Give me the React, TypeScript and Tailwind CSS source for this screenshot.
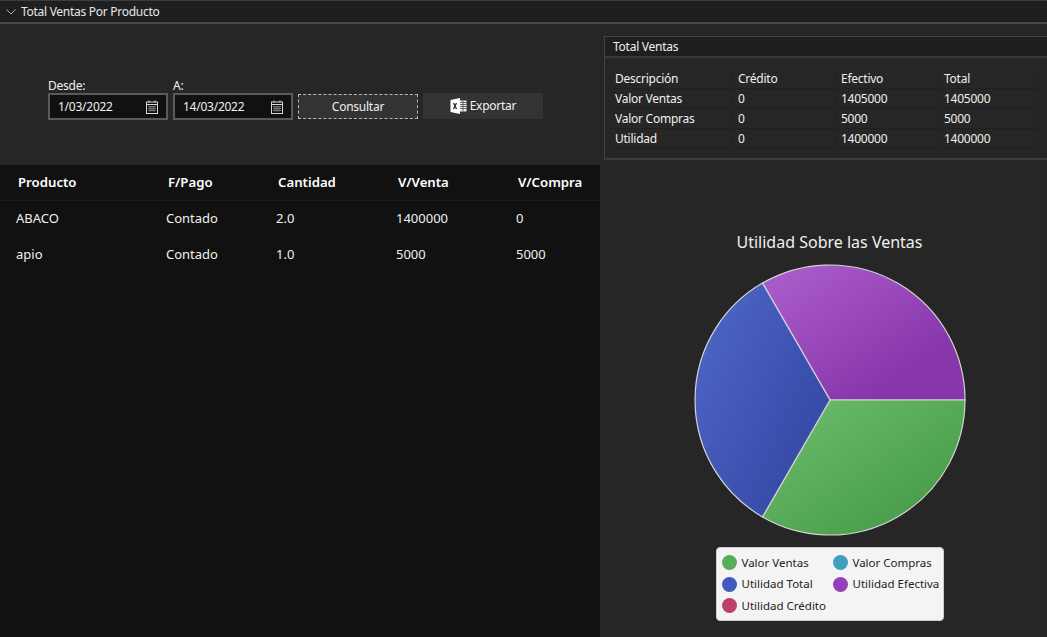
const columns = ["Producto", "F/Pago", "Cantidad", "V/Venta", "V/Compra"];
const widths = ["w-[150px]", "w-[110px]", "w-[120px]", "w-[120px]", "w-[82px]"];

const products = [
  ["ABACO", "Contado", "2.0", "1400000", "0"],
  ["apio", "Contado", "1.0", "5000", "5000"],
];

const totals = [
  ["Descripción", "Crédito", "Efectivo", "Total"],
  ["Valor Ventas", "0", "1405000", "1405000"],
  ["Valor Compras", "0", "5000", "5000"],
  ["Utilidad", "0", "1400000", "1400000"],
];
const totalWidths = ["w-[123px]", "w-[103px]", "w-[103px]", "w-[100px]"];

const legend = [
  { label: "Valor Ventas", color: "bg-[#58ad58]" },
  { label: "Valor Compras", color: "bg-[#409fbd]" },
  { label: "Utilidad Total", color: "bg-[#4259bd]" },
  { label: "Utilidad Efectiva", color: "bg-[#9440bd]" },
  { label: "Utilidad Crédito", color: "bg-[#bd4068]" },
];

function CalendarIcon() {
  return (
    <svg width="12" height="14" viewBox="0 0 12 14" fill="none" className="shrink-0">
      <rect x="0.5" y="2" width="11" height="11.5" stroke="#d8d8d8" />
      <path d="M0.5 4.5h11" stroke="#d8d8d8" />
      <path d="M3 0.5v2M9 0.5v2" stroke="#d8d8d8" />
      <path d="M2 6.5h8M2 8.5h8M2 10.5h8M4 6v5.5M6 6v5.5M8 6v5.5" stroke="#777" />
    </svg>
  );
}

function ExcelIcon() {
  return (
    <svg width="17" height="16" viewBox="0 0 17 16" fill="none">
      <path d="M0.5 2 L10 0 V16 L0.5 14 Z" fill="#fff" />
      <path d="M3.5 5 L6.5 11 M6.5 5 L3.5 11" stroke="#222" strokeWidth="1.2" />
      <rect x="10" y="2.5" width="6.5" height="11" fill="#eee" />
      <path d="M10 4.5h6.5M10 6.5h6.5M10 8.5h6.5M10 10.5h6.5M13 2.5v11" stroke="#333" strokeWidth="0.7" />
    </svg>
  );
}

function DateField({ label, value }: { label: string; value: string }) {
  return (
    <div className="flex w-[120px] flex-col">
      <label className="h-[15px] text-xs leading-[15px] tracking-[-0.25px] text-[#f0f0f0]">{label}</label>
      <div className="flex h-[27px] items-center justify-between border-2 border-[#5a5a5a] bg-[#111] pl-2 pr-[8px] text-xs tracking-[-0.25px] text-[#f0f0f0]">
        <span>{value}</span>
        <CalendarIcon />
      </div>
    </div>
  );
}

function PieChart() {
  return (
    <svg width="272" height="272" viewBox="-136 -136 272 272">
      <defs>
        <linearGradient id="purpleSlice" x1="0" y1="0" x2="1" y2="1">
          <stop offset="0.1" stopColor="#a95ac9" />
          <stop offset="0.75" stopColor="#8837aa" />
        </linearGradient>
        <linearGradient id="blueSlice" x1="0" y1="0" x2="1" y2="0.8">
          <stop offset="0" stopColor="#5069ca" />
          <stop offset="0.8" stopColor="#384ca9" />
        </linearGradient>
        <linearGradient id="greenSlice" x1="0" y1="0" x2="1" y2="1">
          <stop offset="0.1" stopColor="#69bb69" />
          <stop offset="0.75" stopColor="#4c9f4c" />
        </linearGradient>
      </defs>
      <path d="M0 0 L-67.5 -116.9 A135 135 0 0 1 135 0 Z" fill="url(#purpleSlice)" stroke="#d4d4d4" strokeWidth="1.2" />
      <path d="M0 0 L135 0 A135 135 0 0 1 -67.5 116.9 Z" fill="url(#greenSlice)" stroke="#d4d4d4" strokeWidth="1.2" />
      <path d="M0 0 L-67.5 116.9 A135 135 0 0 1 -67.5 -116.9 Z" fill="url(#blueSlice)" stroke="#d4d4d4" strokeWidth="1.2" />
    </svg>
  );
}

export default function App() {
  return (
    <div className="flex h-[637px] w-[1047px] flex-col overflow-hidden bg-[#262626] font-['Noto_Sans',sans-serif] text-[#f0f0f0]">
      {/* Expander header */}
      <div className="flex h-[24px] shrink-0 items-center gap-[5px] border-t border-b-2 border-t-[#3c3c3c] border-b-[#4a4a4a] bg-[#1f1f1f] pl-[6px] text-xs tracking-[-0.28px]">
        <svg width="10" height="6" viewBox="0 0 10 6" fill="none">
          <path d="M0.5 0.5 L5 5 L9.5 0.5" stroke="#aaa" />
        </svg>
        <span className="text-[#e8e8e8]">Total Ventas Por Producto</span>
      </div>

      <div className="flex min-h-0 flex-1">
        {/* Left side */}
        <div className="flex w-[600px] shrink-0 flex-col">
          <div className="flex h-[141px] shrink-0 items-start gap-[5px] pl-12 pt-[54px]">
            <DateField label="Desde:" value="1/03/2022" />
            <DateField label="A:" value="14/03/2022" />
            <button className="mt-[16px] h-[25px] w-[120px] border border-dashed border-[#b8b8b8] bg-[#333] text-xs tracking-[-0.25px] text-[#f0f0f0]">
              Consultar
            </button>
            <button className="mt-[15px] flex h-[26px] w-[120px] items-center justify-center gap-[3px] bg-[#333] text-xs tracking-[-0.25px] text-[#f0f0f0]">
              <ExcelIcon />
              Exportar
            </button>
          </div>

          <div className="flex-1 bg-[#111]">
            <div className="flex h-[36px] items-center border-b border-[#1c1c1c] pl-[18px] pt-[1px] text-[13.2px] font-semibold text-white">
              {columns.map((c, i) => (
                <div key={c} className={widths[i]}>
                  {c}
                </div>
              ))}
            </div>
            {products.map((row) => (
              <div key={row[0]} className="flex h-[36px] items-center pl-4 text-[13px] text-[#f0f0f0]">
                {row.map((cell, i) => (
                  <div key={i} className={widths[i]}>
                    {cell}
                  </div>
                ))}
              </div>
            ))}
          </div>
        </div>

        {/* Right side */}
        <div className="flex min-w-0 flex-1 flex-col pl-1 pt-3">
          <div className="h-[124px] shrink-0 border border-r-0 border-b-2 border-[#444] border-b-[#3c3c3c]">
            <div className="flex h-[21px] items-center border-b-2 border-[#3a3a3a] bg-[#1f1f1f] pl-2 text-xs tracking-[-0.25px]">
              Total Ventas
            </div>
            <div className="pl-[5px] pr-1 pt-[11px] text-xs tracking-[-0.25px]">
              {totals.map((row) => (
                <div key={row[0]} className="flex h-5 items-center border-b border-[#202020]">
                  {row.map((cell, i) => (
                    <div key={i} className={`${totalWidths[i]} border-r border-[#222] pl-[5px]`}>
                      {cell}
                    </div>
                  ))}
                </div>
              ))}
            </div>
          </div>

          <div className="flex flex-1 flex-col items-center pl-2">
            <div className="mt-[72px] text-base leading-5 text-[#f0f0f0]">Utilidad Sobre las Ventas</div>
            <div className="mt-[12px]">
              <PieChart />
            </div>
            <div className="mt-[11px] grid h-[74px] w-[228px] grid-cols-[111px_1fr] content-center gap-y-[5.5px] rounded border border-[#ccc] bg-[#f4f4f4] pl-[5px] text-[11.5px] text-[#222]">
              {legend.map((item) => (
                <div key={item.label} className="flex h-[16px] items-center gap-[5px] whitespace-nowrap">
                  <span className={`h-[15px] w-[15px] rounded-full ${item.color}`} />
                  {item.label}
                </div>
              ))}
            </div>
          </div>
        </div>
      </div>
    </div>
  );
}
